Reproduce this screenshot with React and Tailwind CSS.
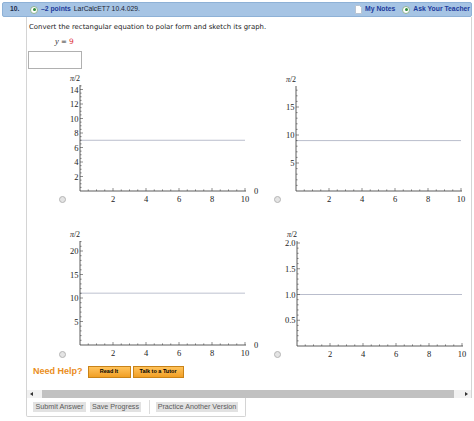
import React from "react";

const graphs = [
  {
    vb: "64 72 198 134",
    ox: 78,
    oy: 190,
    top: 84,
    unit: 7.25,
    majors: [2, 4, 6, 8, 10, 12, 14],
    minor: 0.5,
    max: 14.6,
    lineV: 7,
    zero: true,
  },
  {
    vb: "284 72 190 134",
    ox: 299,
    oy: 190,
    top: 85,
    unit: 5.6,
    majors: [5, 10, 15],
    minor: 1,
    max: 18.7,
    lineV: 9,
    zero: false,
  },
  {
    vb: "64 227 198 134",
    ox: 78,
    oy: 344,
    top: 240,
    unit: 4.7,
    majors: [5, 10, 15, 20],
    minor: 1,
    max: 22.1,
    lineV: 11,
    zero: true,
    thick: true,
  },
  {
    vb: "284 227 190 134",
    ox: 300,
    oy: 345,
    top: 240,
    unit: 51.5,
    majors: [0.5, 1, 1.5, 2],
    minor: 0.1,
    max: 2.04,
    lineV: 1,
    zero: false,
    fixed: true,
  },
];

function Graph({ g }) {
  const xs = 16.5;
  const xTicks = [];
  for (let i = 1; i <= 20; i++) xTicks.push(i * 0.5);
  const yTicks = [];
  const n = Math.floor(g.max / g.minor + 0.001);
  for (let i = 1; i <= n; i++) yTicks.push(+(i * g.minor).toFixed(2));
  const isMajor = (v) => g.majors.some((m) => Math.abs(m - v) < 0.001);
  const lineY = g.oy - g.lineV * g.unit;

  return (
    <svg
      viewBox={g.vb}
      width={g.vb.split(" ")[2]}
      height="134"
      className="block"
      fontFamily="'Liberation Serif', serif"
    >
      <line
        x1={g.ox}
        y1={lineY}
        x2={g.ox + 165}
        y2={lineY}
        stroke={g.thick ? "#d3d6df" : "#b9bdcc"}
        strokeWidth={g.thick ? 1.6 : 1}
      />
      <line x1={g.ox} y1={g.top} x2={g.ox} y2={g.oy} stroke="#333" strokeWidth="0.8" />
      <line x1={g.ox} y1={g.oy} x2={g.ox + 166} y2={g.oy} stroke="#333" strokeWidth="0.8" />
      {xTicks.map((v) => {
        const x = g.ox + v * xs;
        const big = Number.isInteger(v) && v % 2 === 0;
        return (
          <line
            key={"x" + v}
            x1={x}
            y1={g.oy}
            x2={x}
            y2={g.oy - (big ? 3 : 1.6)}
            stroke="#444"
            strokeWidth="0.6"
          />
        );
      })}
      {[2, 4, 6, 8, 10].map((v) => (
        <text
          key={"xl" + v}
          x={g.ox + v * xs}
          y={g.oy + 11}
          fontSize="8.5"
          textAnchor="middle"
          fill="#222"
        >
          {v}
        </text>
      ))}
      {yTicks.map((v) => {
        const y = g.oy - v * g.unit;
        const big = isMajor(v);
        return (
          <line
            key={"y" + v}
            x1={g.ox}
            y1={y}
            x2={g.ox + (big ? 3 : 1.6)}
            y2={y}
            stroke="#444"
            strokeWidth="0.6"
          />
        );
      })}
      {g.majors.map((v) => (
        <text
          key={"yl" + v}
          x={g.ox - 1.5}
          y={g.oy - v * g.unit + 3}
          fontSize="8.5"
          textAnchor="end"
          fill="#222"
        >
          {g.fixed ? v.toFixed(1) : v}
        </text>
      ))}
      <text x={g.ox - 5} y={g.top - 4.5} fontSize="8" textAnchor="middle" fill="#222">
        <tspan fontStyle="italic">π</tspan>/2
      </text>
      {g.zero && (
        <text x={g.ox + 176} y={g.oy + 3} fontSize="8.5" textAnchor="middle" fill="#222">
          0
        </text>
      )}
    </svg>
  );
}

function Radio() {
  return (
    <span className="mb-[4px] block h-[7px] w-[7px] shrink-0 rounded-full border border-[#b5b5b5] bg-[#e4e4e4]" />
  );
}

function GreenDot() {
  return (
    <span className="flex h-[8px] w-[8px] items-center justify-center rounded-full border border-[#8fb38f] bg-white">
      <span className="h-[3px] w-[3px] rounded-full bg-[#2e8b3a]" />
    </span>
  );
}

export default function App() {
  return (
    <div className="h-[421px] w-[474px] overflow-hidden bg-white pt-[2px] pl-[2px] font-['Liberation_Sans',Arial,sans-serif]">
      {/* question header */}
      <div className="flex h-[15px] w-[470px] items-center rounded-[2px] border border-[#8eb1d6] bg-[#a6c4e4] text-[6.8px] font-bold">
        <span className="ml-[7px] w-[15px] text-[#1f2b4a]">10.</span>
        <span className="ml-[5px]">
          <GreenDot />
        </span>
        <span className="ml-[3px] text-[#1d3b9c]">–2 points</span>
        <span className="ml-[3px] font-normal text-[#1e2433]">LarCalcET7 10.4.029.</span>
        <span className="ml-auto flex items-center">
          <svg width="7" height="9" viewBox="0 0 7 9" className="mr-[3px]">
            <path d="M0.5 0.5 H4.5 L6.5 2.5 V8.5 H0.5 Z" fill="#fff" stroke="#b9c4d2" />
          </svg>
          <span className="text-[#1d3b9c]">My Notes</span>
          <span className="ml-[7px] mr-[3px]">
            <GreenDot />
          </span>
          <span className="mr-[1px] text-[#1d3b9c]">Ask Your Teacher</span>
        </span>
      </div>

      {/* question body */}
      <div className="ml-[24px] w-[446px] border-x border-[#d4d4d4] pt-[5px]">
        <p className="pl-[2px] font-['DejaVu_Sans',Verdana,sans-serif] text-[6.9px] leading-[10px] text-[#222]">
          Convert the rectangular equation to polar form and sketch its graph.
        </p>
        <p className="mt-[4px] pl-[28px] font-['DejaVu_Sans',Verdana,sans-serif] text-[7px] leading-[10px] text-[#333]">
          <span className="font-['Liberation_Serif',serif] text-[8.5px] italic">y</span> ={" "}
          <span className="text-[7.5px] text-[#e0343a]">9</span>
        </p>
        <div className="mt-[4px] ml-[1px] h-[18px] w-[54px] border border-[#b0b0b0] bg-white" />

        <div className="mt-[4px] flex flex-col gap-[21px] pl-[32px]">
          <div className="flex">
            <div className="flex w-[219px] items-end">
              <Radio />
              <Graph g={graphs[0]} />
            </div>
            <div className="flex items-end">
              <Radio />
              <Graph g={graphs[1]} />
            </div>
          </div>
          <div className="flex">
            <div className="flex w-[219px] items-end">
              <Radio />
              <Graph g={graphs[2]} />
            </div>
            <div className="flex items-end">
              <Radio />
              <Graph g={graphs[3]} />
            </div>
          </div>
        </div>

        {/* help */}
        <div className="mt-[3px] flex h-[13px] items-center pl-[6px]">
          <span className="text-[9px] font-bold text-[#ea8d22]">Need Help?</span>
          <button className="ml-[5px] h-[12px] w-[43px] border border-[#c98318] bg-gradient-to-b from-[#ffc35a] to-[#f19f22] text-[5.5px] font-bold text-black">
            Read It
          </button>
          <button className="ml-[2px] h-[12px] w-[51px] border border-[#c98318] bg-gradient-to-b from-[#ffc35a] to-[#f19f22] text-[5.5px] font-bold text-black">
            Talk to a Tutor
          </button>
        </div>

        {/* horizontal scrollbar */}
        <div className="mt-[12px] flex h-[8px] items-center bg-[#f1f1f1]">
          <span className="ml-[3px] h-0 w-0 border-y-[2px] border-r-[3px] border-y-transparent border-r-[#333]" />
          <span className="ml-[9px] h-full w-[412px] bg-[#c1c1c1]" />
          <span className="ml-auto mr-[3px] h-0 w-0 border-y-[2px] border-l-[3px] border-y-transparent border-l-[#333]" />
        </div>
      </div>

      {/* submit buttons */}
      <div className="ml-[24px] flex h-[19px] w-[220px] items-center rounded-b-[2px] border-x border-b border-[#d4d4d4] pl-[6px] text-[7.2px] text-[#5a5a5a]">
        <button className="h-[10px] w-[53px] bg-[#e2e2e2] leading-[10px]">Submit Answer</button>
        <button className="ml-[4px] h-[10px] w-[51px] bg-[#e2e2e2] leading-[10px]">Save Progress</button>
        <span className="ml-[8px] h-[14px] w-px bg-[#dcdcdc]" />
        <button className="ml-[6px] h-[10px] w-[82px] bg-[#e2e2e2] leading-[10px]">Practice Another Version</button>
      </div>
    </div>
  );
}
